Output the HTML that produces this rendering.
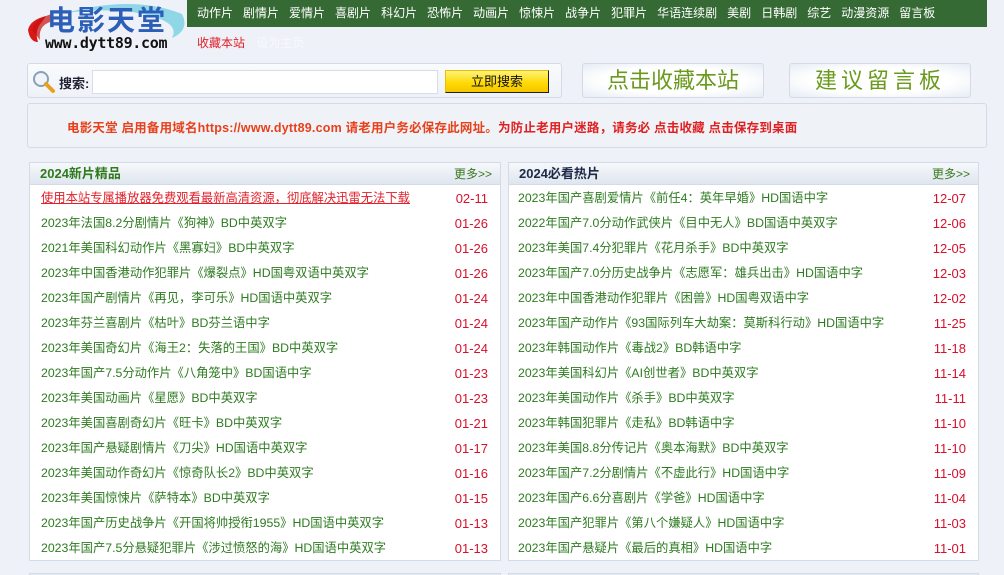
<!DOCTYPE html>
<html><head><meta charset="utf-8">
<style>
*{margin:0;padding:0;box-sizing:border-box}
html,body{width:1004px;height:575px;overflow:hidden}
body{background:#eef2f8;font-family:"Liberation Sans","Noto Sans CJK SC","WenQuanYi Zen Hei",sans-serif;font-size:12px;position:relative}
.abs{position:absolute}
#nav{left:187px;top:0;width:800px;height:27px;background:#356a35;color:#fff;font-size:12px;line-height:26px;padding-left:10px;white-space:nowrap}
#nav span{margin-right:10px}
.box{background:linear-gradient(#f9fbfd,#eef2f8);border:1px solid #d3dbe6;border-radius:3px}
.bigbtn{background:radial-gradient(ellipse at center,#fff 55%,#e6ecf5);border:1px solid #d3dbe6;border-radius:3px;color:#6a9a1c;font-size:22px;text-align:center;line-height:34px}
.panel{background:#fff;border:1px solid #d3dbe6}
.ph{height:22px;background:linear-gradient(#f6f8fb,#dfe6ef);border-bottom:1px solid #d3dbe6;line-height:22px;padding:0 8px 0 10px;font-size:13px;font-weight:bold}
.ph i{float:right;font-style:normal;font-weight:normal;color:#3a7a1e;font-size:12px}
.row{height:25px;line-height:25px;padding:0 12px 0 11px;font-size:12.3px;color:#2d7b20;white-space:nowrap}
.row b{float:right;font-weight:normal;color:#d8102c;font-size:13px}
</style></head><body>
<svg class="abs" style="left:22px;top:0" width="166" height="56">
<path d="M40 14 Q110 -6 160 14 Q168 30 150 38 Q160 20 110 12 Q70 8 40 14Z" fill="#8fd6e6"/>
<path d="M6 30 Q8 20 24 16 L20 22 Q12 30 16 42 Q8 42 6 30Z" fill="#d81818"/>
<path d="M10 30 Q14 18 30 14 L28 22 Q16 26 18 40 Z" fill="#c81010" opacity=".7"/>
</svg>
<div class="abs" style="left:47px;top:5px;font-size:28px;line-height:32px;font-weight:bold;color:#2c5fb8;letter-spacing:2px">电影天堂</div>
<div class="abs" style="left:45px;top:35px;font-size:15px;line-height:16px;font-weight:bold;color:#111;font-family:'DejaVu Sans Mono','Liberation Mono',monospace;letter-spacing:-0.3px">www.dytt89.com</div>
<div id="nav" class="abs"><span>动作片</span><span>剧情片</span><span>爱情片</span><span>喜剧片</span><span>科幻片</span><span>恐怖片</span><span>动画片</span><span>惊悚片</span><span>战争片</span><span>犯罪片</span><span>华语连续剧</span><span>美剧</span><span>日韩剧</span><span>综艺</span><span>动漫资源</span><span>留言板</span></div>
<div class="abs" style="left:197px;top:34px;font-size:12px;color:#e0202a">收藏本站 <span style="color:#f7f9fc;margin-left:8px">设为主页</span></div>
<div class="abs box" style="left:27px;top:63px;width:535px;height:35px"></div>
<svg class="abs" style="left:31px;top:69px" width="24" height="24"><circle cx="10" cy="10" r="7" fill="#eef4fa" stroke="#8aa0b8" stroke-width="2"/><path d="M15 15 L22 22" stroke="#e8a020" stroke-width="4" stroke-linecap="round"/></svg>
<div class="abs" style="left:59px;top:73px;font-size:13px;font-weight:bold;color:#223">搜索:</div>
<div class="abs" style="left:92px;top:70px;width:346px;height:24px;background:#fff;border:1px solid #d6dde6"></div>
<div class="abs" style="left:445px;top:70px;width:104px;height:23px;background:linear-gradient(#fff27a,#ffd800 60%,#f5c400);border:1px solid #222;border-top-color:#e8c000;border-left-color:#e8c000;text-align:center;line-height:22px;font-size:13px;color:#111">立即搜索</div>
<div class="abs bigbtn" style="left:582px;top:63px;width:182px;height:35px">点击收藏本站</div>
<div class="abs bigbtn" style="left:789px;top:63px;width:182px;height:35px;letter-spacing:4px">建议留言板</div>
<div class="abs box" style="left:27px;top:103px;width:960px;height:45px;background:#eff3f8"></div>
<div class="abs" style="left:67px;top:117px;font-size:12.5px;font-weight:bold;color:#e8401a;white-space:nowrap;letter-spacing:0.2px">电影天堂 启用备用域名https://www.dytt89.com 请老用户务必保存此网址。<span style="color:#e02020">为防止老用户迷路，请务必 点击收藏 点击保存到桌面</span></div>
<div class="abs panel" style="left:29px;top:162px;width:472px;height:399px">
<div class="ph" style="color:#2f7a1c">2024新片精品<i>更多&gt;&gt;</i></div>
<div style="padding-top:1px">
<div class="row"><span style="color:#e0202a;text-decoration:underline">使用本站专属播放器免费观看最新高清资源，彻底解决迅雷无法下载</span><b>02-11</b></div>
<div class="row">2023年法国8.2分剧情片《狗神》BD中英双字<b>01-26</b></div>
<div class="row">2021年美国科幻动作片《黑寡妇》BD中英双字<b>01-26</b></div>
<div class="row">2023年中国香港动作犯罪片《爆裂点》HD国粤双语中英双字<b>01-26</b></div>
<div class="row">2023年国产剧情片《再见，李可乐》HD国语中英双字<b>01-24</b></div>
<div class="row">2023年芬兰喜剧片《枯叶》BD芬兰语中字<b>01-24</b></div>
<div class="row">2023年美国奇幻片《海王2：失落的王国》BD中英双字<b>01-24</b></div>
<div class="row">2023年国产7.5分动作片《八角笼中》BD国语中字<b>01-23</b></div>
<div class="row">2023年美国动画片《星愿》BD中英双字<b>01-23</b></div>
<div class="row">2023年美国喜剧奇幻片《旺卡》BD中英双字<b>01-21</b></div>
<div class="row">2023年国产悬疑剧情片《刀尖》HD国语中英双字<b>01-17</b></div>
<div class="row">2023年美国动作奇幻片《惊奇队长2》BD中英双字<b>01-16</b></div>
<div class="row">2023年美国惊悚片《萨特本》BD中英双字<b>01-15</b></div>
<div class="row">2023年国产历史战争片《开国将帅授衔1955》HD国语中英双字<b>01-13</b></div>
<div class="row">2023年国产7.5分悬疑犯罪片《涉过愤怒的海》HD国语中英双字<b>01-13</b></div>
</div></div>
<div class="abs panel" style="left:508px;top:162px;width:471px;height:399px">
<div class="ph" style="color:#1e2a48">2024必看热片<i>更多&gt;&gt;</i></div>
<div style="padding-top:1px">
<div class="row" style="padding-left:9px">2023年国产喜剧爱情片《前任4：英年早婚》HD国语中字<b>12-07</b></div>
<div class="row" style="padding-left:9px">2022年国产7.0分动作武侠片《目中无人》BD国语中英双字<b>12-06</b></div>
<div class="row" style="padding-left:9px">2023年美国7.4分犯罪片《花月杀手》BD中英双字<b>12-05</b></div>
<div class="row" style="padding-left:9px">2023年国产7.0分历史战争片《志愿军：雄兵出击》HD国语中字<b>12-03</b></div>
<div class="row" style="padding-left:9px">2023年中国香港动作犯罪片《困兽》HD国粤双语中字<b>12-02</b></div>
<div class="row" style="padding-left:9px">2023年国产动作片《93国际列车大劫案：莫斯科行动》HD国语中字<b>11-25</b></div>
<div class="row" style="padding-left:9px">2023年韩国动作片《毒战2》BD韩语中字<b>11-18</b></div>
<div class="row" style="padding-left:9px">2023年美国科幻片《AI创世者》BD中英双字<b>11-14</b></div>
<div class="row" style="padding-left:9px">2023年美国动作片《杀手》BD中英双字<b>11-11</b></div>
<div class="row" style="padding-left:9px">2023年韩国犯罪片《走私》BD韩语中字<b>11-10</b></div>
<div class="row" style="padding-left:9px">2023年美国8.8分传记片《奥本海默》BD中英双字<b>11-10</b></div>
<div class="row" style="padding-left:9px">2023年国产7.2分剧情片《不虚此行》HD国语中字<b>11-09</b></div>
<div class="row" style="padding-left:9px">2023年国产6.6分喜剧片《学爸》HD国语中字<b>11-04</b></div>
<div class="row" style="padding-left:9px">2023年国产犯罪片《第八个嫌疑人》HD国语中字<b>11-03</b></div>
<div class="row" style="padding-left:9px">2023年国产悬疑片《最后的真相》HD国语中字<b>11-01</b></div>
</div></div>
<div class="abs panel" style="left:29px;top:573px;width:472px;height:10px;background:#e4eaf2"></div>
<div class="abs panel" style="left:508px;top:573px;width:471px;height:10px;background:#e4eaf2"></div>
</body></html>
